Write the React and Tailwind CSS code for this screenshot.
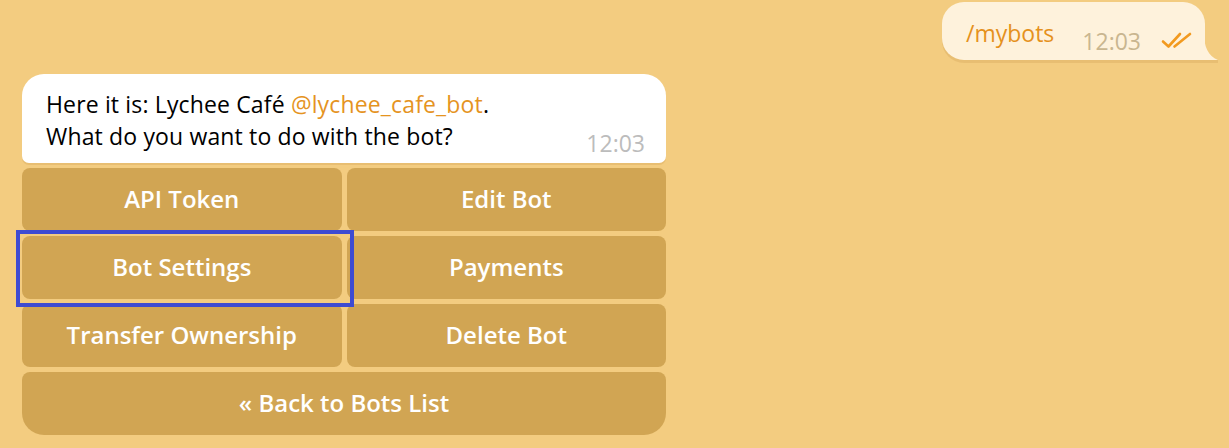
import React from "react";

const font = { fontFamily: '"Open Sans", "Noto Sans", sans-serif' };

function Checks() {
  return (
    <svg width="32" height="18" viewBox="0 0 32 18" fill="none" stroke="#f29a1f" strokeWidth="2.6" strokeLinecap="round" strokeLinejoin="round">
      <path d="M2 10.5 L7.5 15.5 L19 3" />
      <path d="M13.5 15.5 L29 3" />
    </svg>
  );
}

function Btn({ children, className = "", highlight = false }) {
  return (
    <div className={"relative flex h-[63px] items-center justify-center bg-[#d1a553] pb-[2px] text-[24px] font-semibold text-white " + className}>
      {children}
      {highlight && (
        <div className="pointer-events-none absolute z-10 left-[-6px] right-[-12px] top-[-6px] bottom-[-8px] border-4 border-[#3e4bd1]" />
      )}
    </div>
  );
}

export default function App() {
  return (
    <div className="h-[448px] w-full overflow-hidden bg-[#f3cc80]" style={font}>
      <div className="flex justify-end pr-[24px] pt-[2px]">
        <div className="relative flex h-[58px] w-[263px] items-start rounded-l-[22px] rounded-tr-[22px] bg-[#fef2dc] pl-[24px] shadow-[0_3px_0_#e8be72]">
          <span className="mt-[15px] whitespace-nowrap text-[23px] leading-[32px] text-[#e5911c]">/mybots</span>
          <span className="ml-[28px] mt-[23px] whitespace-nowrap text-[23px] leading-[32px] text-[#c9b690]">12:03</span>
          <span className="ml-[20px] mt-[29px]">
            <Checks />
          </span>
          <svg className="absolute right-[-13px] bottom-0" width="14" height="26" viewBox="0 0 14 26">
            <path d="M0 0 C0 12 4 22 14 26 L0 26 Z" fill="#fef2dc" />
          </svg>
          <div className="absolute right-[-13px] bottom-[-3px] h-[3px] w-[14px] bg-[#e8be72]" />
        </div>
      </div>

      <div className="ml-[22px] mt-[14px] w-[644px]">
        <div className="flex items-end rounded-t-[22px] rounded-b-[7px] bg-white pl-[24px] pr-[21px] pt-[14px] pb-[11px] shadow-[0_2px_0_#e8be72]">
          <div className="flex-1 whitespace-nowrap text-[23px] leading-[32px] tracking-[0.15px] text-black">
            <div>
              Here it is: Lychee Café <span className="text-[#e5941f]">@lychee_cafe_bot</span>.
            </div>
            <div>What do you want to do with the bot?</div>
          </div>
          <span className="-mb-[5px] text-[23px] leading-[28px] text-[#bcbcbc]">12:03</span>
        </div>

        <div className="mt-[5px] grid grid-cols-2 gap-[5px]">
          <Btn className="rounded-[8px]">API Token</Btn>
          <Btn className="rounded-[8px]">Edit Bot</Btn>
          <Btn className="rounded-[8px]" highlight>Bot Settings</Btn>
          <Btn className="rounded-[8px]">Payments</Btn>
          <Btn className="rounded-[8px]">Transfer Ownership</Btn>
          <Btn className="rounded-[8px]">Delete Bot</Btn>
          <Btn className="col-span-2 rounded-t-[8px] rounded-b-[22px]">« Back to Bots List</Btn>
        </div>
      </div>
    </div>
  );
}
